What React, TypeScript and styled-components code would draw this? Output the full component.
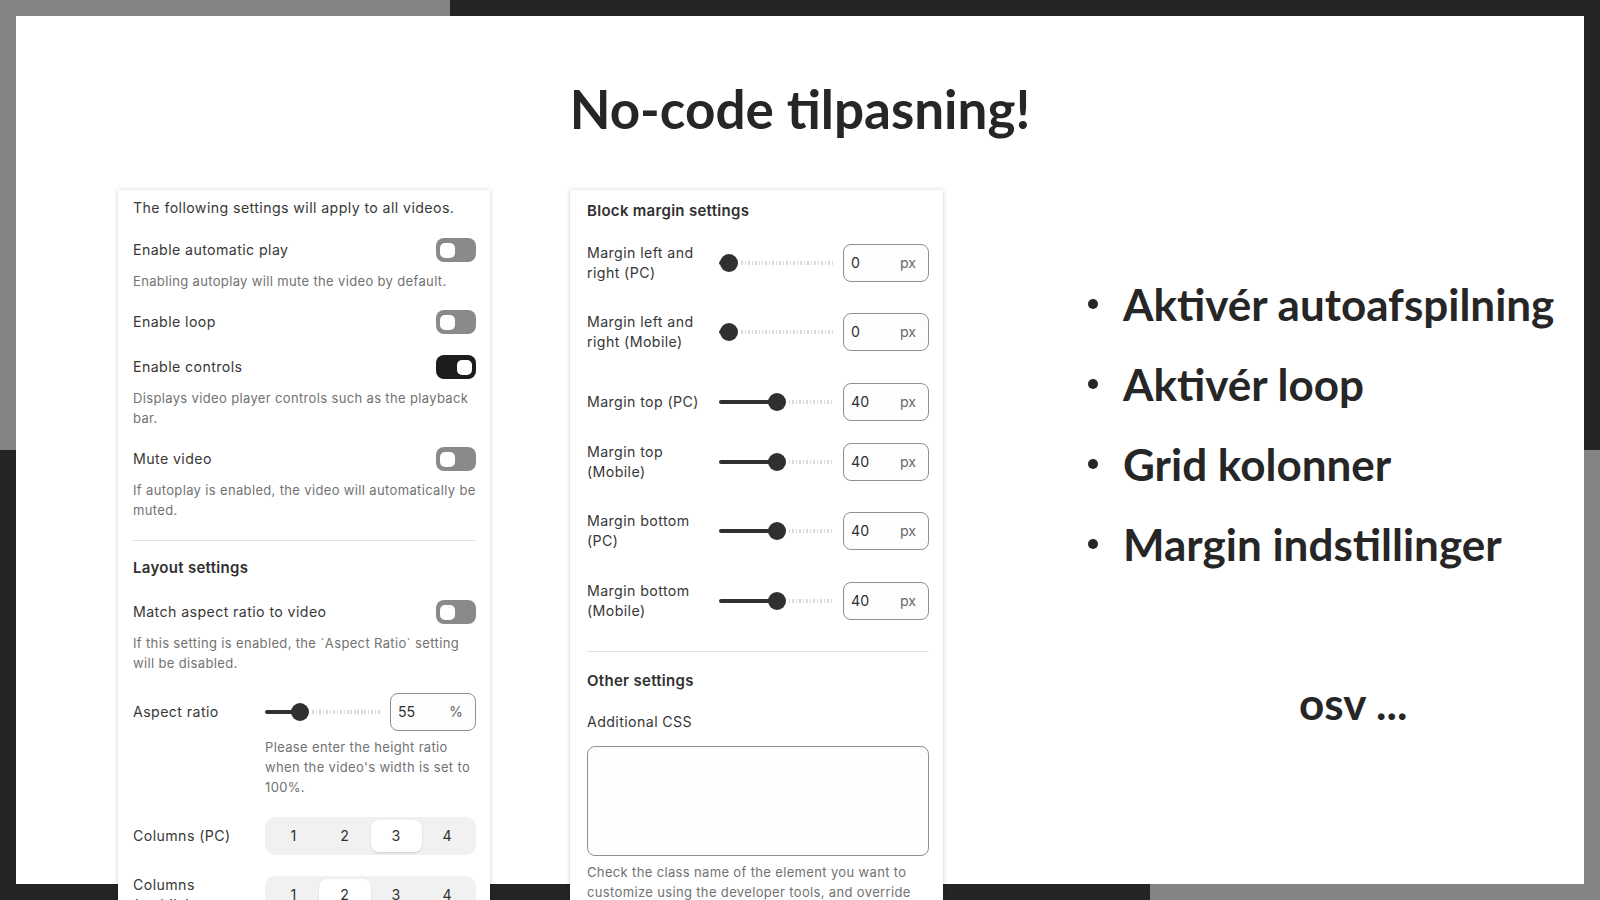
import React from "react";
import styled, { createGlobalStyle } from "styled-components";

const GlobalStyle = createGlobalStyle`
  html, body {
    margin: 0;
    padding: 0;
  }
  body {
    width: 1600px;
    height: 900px;
    overflow: hidden;
  }
`;

const Stage = styled.div`
  width: 1600px;
  height: 900px;
  box-sizing: border-box;
  padding: 16px;
  overflow: hidden;
  background-color: #242424;
  background-image: linear-gradient(#848484, #848484),
    linear-gradient(#848484, #848484);
  background-size: 450px 450px, 450px 450px;
  background-position: 0 0, 1150px 450px;
  background-repeat: no-repeat;
`;

const Slide = styled.main`
  height: 868px;
  background: #fff;
  display: flex;
  flex-direction: column;
`;

const Title = styled.h1`
  margin: 66px 0 0;
  font-family: Lato, "Open Sans", sans-serif;
  font-weight: 700;
  font-size: 53px;
  line-height: 53px;
  text-align: center;
  color: #262626;
`;

const Content = styled.div`
  display: flex;
  align-items: flex-start;
  margin-top: 55px;
  padding-left: 102px;
`;

const Panel = styled.section<{ $width: number; $padLeft: number; $padTop: number; $gapLeft?: number }>`
  width: ${({ $width }) => $width}px;
  box-sizing: border-box;
  margin-left: ${({ $gapLeft }) => $gapLeft ?? 0}px;
  padding: ${({ $padTop }) => $padTop}px 14px 40px ${({ $padLeft }) => $padLeft}px;
  background: #fff;
  box-shadow: 0 0 5px rgba(0, 0, 0, 0.16), 0 1px 2px rgba(0, 0, 0, 0.08);
  display: flex;
  flex-direction: column;
  font-family: Inter, "Liberation Sans", sans-serif;
  font-size: 14.2px;
  letter-spacing: 0.4px;
  line-height: 20px;
  color: #383838;
`;

const Text = styled.div<{ $mt?: number }>`
  margin-top: ${({ $mt }) => $mt ?? 0}px;
`;

const Help = styled.div<{ $mt?: number; $indent?: number }>`
  margin-top: ${({ $mt }) => $mt ?? 9}px;
  padding-left: ${({ $indent }) => $indent ?? 0}px;
  font-size: 13px;
  letter-spacing: 0.35px;
  line-height: 20px;
  color: #727272;
`;

const Heading = styled.h3<{ $mt?: number }>`
  margin: ${({ $mt }) => $mt ?? 0}px 0 0;
  font-size: 15px;
  letter-spacing: 0.3px;
  line-height: 20px;
  font-weight: 600;
  color: #303030;
`;

const Divider = styled.hr<{ $mt: number }>`
  margin: ${({ $mt }) => $mt}px 0 0;
  border: none;
  border-top: 1px solid #e3e3e3;
`;

const ToggleRow = styled.div<{ $mt?: number }>`
  margin-top: ${({ $mt }) => $mt ?? 0}px;
  display: flex;
  align-items: center;
  justify-content: space-between;
  height: 24px;
`;

const Switch = styled.span<{ $on?: boolean }>`
  width: 40px;
  height: 24px;
  box-sizing: border-box;
  padding: 0 4px;
  border-radius: 8px;
  background: ${({ $on }) => ($on ? "#1c1c1c" : "#8a8a8a")};
  display: flex;
  align-items: center;
  justify-content: ${({ $on }) => ($on ? "flex-end" : "flex-start")};

  &::after {
    content: "";
    width: 15px;
    height: 15px;
    border-radius: 5px;
    background: #fff;
  }
`;

const FieldRow = styled.div<{ $mt?: number }>`
  margin-top: ${({ $mt }) => $mt ?? 0}px;
  display: grid;
  grid-template-columns: 132px 1fr 86px;
  align-items: center;
`;

const FieldLabel = styled.div`
  line-height: 20px;
`;

const Track = styled.div`
  display: flex;
  align-items: center;
  height: 20px;
  margin-right: 10px;
`;

const Fill = styled.span`
  height: 4px;
  border-radius: 2px 0 0 2px;
  background: #303030;
  flex: none;
`;

const Knob = styled.span`
  width: 18px;
  height: 18px;
  margin-left: -9px;
  border-radius: 50%;
  background: #303030;
  flex: none;
`;

const Ticks = styled.span`
  flex: 1;
  height: 4px;
  margin-left: 3px;
  background: repeating-linear-gradient(90deg, #dadada 0 1.5px, transparent 1.5px 3.5px);
`;

const NumberBox = styled.div`
  height: 38px;
  box-sizing: border-box;
  border: 1px solid #8f8f8f;
  border-radius: 8px;
  background: #fdfdfd;
  display: flex;
  align-items: center;
  justify-content: space-between;
  padding: 0 12px 0 7px;
  color: #303030;
  letter-spacing: 0;
`;

const Unit = styled.span`
  color: #6a6a6a;
`;

const Segmented = styled.div`
  grid-column: 2 / span 2;
  height: 38px;
  box-sizing: border-box;
  padding: 3px;
  border-radius: 10px;
  background: #f1f1f1;
  display: grid;
  grid-template-columns: repeat(4, 1fr);
`;

const Segment = styled.span<{ $active?: boolean }>`
  display: flex;
  align-items: center;
  justify-content: center;
  border-radius: 8px;
  background: ${({ $active }) => ($active ? "#fff" : "transparent")};
  box-shadow: ${({ $active }) => ($active ? "0 1px 2px rgba(0,0,0,0.15)" : "none")};
  color: #303030;
`;

const CssBox = styled.div`
  margin-top: 14px;
  height: 110px;
  box-sizing: border-box;
  border: 1px solid #8f8f8f;
  border-radius: 8px;
  background: #fdfdfd;
`;

const Bullets = styled.ul`
  margin: 0 0 0 145px;
  padding: 74px 0 0;
  list-style: none;
  font-family: Lato, "Open Sans", sans-serif;
  font-weight: 700;
  font-size: 44px;
  line-height: 80px;
  color: #262626;
  white-space: nowrap;
`;

const Bullet = styled.li`
  display: flex;
  align-items: center;
  gap: 25px;

  &::before {
    content: "";
    width: 10px;
    height: 10px;
    border-radius: 50%;
    background: #262626;
    flex: none;
  }
`;

const Etc = styled.div`
  margin: 79px 0 0 356px;
  font-family: Lato, "Open Sans", sans-serif;
  font-weight: 700;
  font-size: 44px;
  line-height: 80px;
  color: #262626;
`;

function Slider({ pos }: { pos: number }) {
  return (
    <Track>
      <Fill style={{ width: pos }} />
      <Knob />
      <Ticks />
    </Track>
  );
}

function NumberField({ value, unit }: { value: string; unit: string }) {
  return (
    <NumberBox>
      <span>{value}</span>
      <Unit>{unit}</Unit>
    </NumberBox>
  );
}

function Columns({ active }: { active: number }) {
  return (
    <Segmented>
      {[1, 2, 3, 4].map((n) => (
        <Segment key={n} $active={n === active}>
          {n}
        </Segment>
      ))}
    </Segmented>
  );
}

const margins = [
  { label: ["Margin left and", "right (PC)"], value: "0", pos: 10, mt: 22 },
  { label: ["Margin left and", "right (Mobile)"], value: "0", pos: 10, mt: 29 },
  { label: ["Margin top (PC)"], value: "40", pos: 58, mt: 31 },
  { label: ["Margin top", "(Mobile)"], value: "40", pos: 58, mt: 21 },
  { label: ["Margin bottom", "(PC)"], value: "40", pos: 58, mt: 29 },
  { label: ["Margin bottom", "(Mobile)"], value: "40", pos: 58, mt: 30 },
];

export default function App() {
  return (
    <>
      <GlobalStyle />
      <Stage>
        <Slide>
          <Title>No-code tilpasning!</Title>
          <Content>
            <Panel $width={372} $padLeft={15} $padTop={8}>
              <Text>The following settings will apply to all videos.</Text>
              <ToggleRow $mt={20}>
                <span>Enable automatic play</span>
                <Switch />
              </ToggleRow>
              <Help>Enabling autoplay will mute the video by default.</Help>
              <ToggleRow $mt={19}>
                <span>Enable loop</span>
                <Switch />
              </ToggleRow>
              <ToggleRow $mt={21}>
                <span>Enable controls</span>
                <Switch $on />
              </ToggleRow>
              <Help>Displays video player controls such as the playback bar.</Help>
              <ToggleRow $mt={19}>
                <span>Mute video</span>
                <Switch />
              </ToggleRow>
              <Help>If autoplay is enabled, the video will automatically be muted.</Help>
              <Divider $mt={20} />
              <Heading $mt={17}>Layout settings</Heading>
              <ToggleRow $mt={22}>
                <span>Match aspect ratio to video</span>
                <Switch />
              </ToggleRow>
              <Help>If this setting is enabled, the `Aspect Ratio` setting will be disabled.</Help>
              <FieldRow $mt={20}>
                <FieldLabel>Aspect ratio</FieldLabel>
                <Slider pos={35} />
                <NumberField value="55" unit="%" />
              </FieldRow>
              <Help $mt={6} $indent={132}>
                Please enter the height ratio when the video's width is set to 100%.
              </Help>
              <FieldRow $mt={20}>
                <FieldLabel>Columns (PC)</FieldLabel>
                <Columns active={3} />
              </FieldRow>
              <FieldRow $mt={20}>
                <FieldLabel>
                  Columns
                  <br />
                  (mobile)
                </FieldLabel>
                <Columns active={2} />
              </FieldRow>
            </Panel>

            <Panel $width={373} $padLeft={17} $padTop={11} $gapLeft={80}>
              <Heading>Block margin settings</Heading>
              {margins.map((m) => (
                <FieldRow key={m.label.join(" ")} $mt={m.mt}>
                  <FieldLabel>
                    {m.label[0]}
                    {m.label[1] && <br />}
                    {m.label[1]}
                  </FieldLabel>
                  <Slider pos={m.pos} />
                  <NumberField value={m.value} unit="px" />
                </FieldRow>
              ))}
              <Divider $mt={30} />
              <Heading $mt={19}>Other settings</Heading>
              <Text $mt={21}>Additional CSS</Text>
              <CssBox />
              <Help $mt={6}>
                Check the class name of the element you want to customize using the developer
                tools, and override the styles here.
              </Help>
            </Panel>

            <div>
              <Bullets>
                <Bullet>Aktivér autoafspilning</Bullet>
                <Bullet>Aktivér loop</Bullet>
                <Bullet>Grid kolonner</Bullet>
                <Bullet>Margin indstillinger</Bullet>
              </Bullets>
              <Etc>osv ...</Etc>
            </div>
          </Content>
        </Slide>
      </Stage>
    </>
  );
}
